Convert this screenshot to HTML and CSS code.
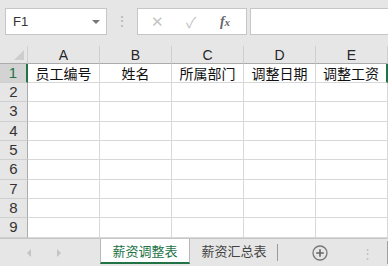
FILE: index.html
```html
<!DOCTYPE html>
<html lang="zh-CN">
<head>
  <meta charset="UTF-8" />
  <title>薪资调整表</title>
  <link rel="stylesheet" href="styles.css">
</head>
<body>
  <div class="toolbar">
    <div class="name-box">
      <span class="cell-ref">F1</span>
      <span class="drop-arrow"></span>
    </div>
    <div class="grip">⋮</div>
    <div class="fx-buttons">
      <span class="fx-btn cancel">✕</span>
      <span class="fx-btn enter">✓</span>
      <span class="fx-btn fx"><i>f</i><i class="x">x</i></span>
    </div>
    <div class="formula-input"></div>
  </div>

  <div class="sheet">
    <div class="corner"><span class="corner-tri"></span></div>
    <div class="col-head">A</div>
    <div class="col-head">B</div>
    <div class="col-head">C</div>
    <div class="col-head">D</div>
    <div class="col-head">E</div>

    <div class="row-head active">1</div>
    <div class="cell">员工编号</div>
    <div class="cell">姓名</div>
    <div class="cell">所属部门</div>
    <div class="cell">调整日期</div>
    <div class="cell last-sel">调整工资</div>
  </div>
  <div class="sheet-body" id="body"></div>

  <div class="tabs">
    <div class="nav">
      <span class="arrow left"></span>
      <span class="arrow right"></span>
    </div>
    <div class="tab current">薪资调整表</div>
    <div class="tab">薪资汇总表</div>
    <div class="tab-sep"></div>
    <div class="add-sheet">
      <svg width="16" height="16" viewBox="0 0 16 16">
        <circle cx="8" cy="8" r="7" fill="none" stroke="#777" stroke-width="1.3"/>
        <path d="M8 4.2v7.6M4.2 8h7.6" stroke="#666" stroke-width="1.6"/>
      </svg>
    </div>
    <div class="tab-grip">⋮</div>
    <div class="tab-end"></div>
  </div>

  <script>
    // rows 2..9, heights taken from the sheet
    const heights = [19, 20, 19, 19, 20, 19, 19, 20];
    const body = document.getElementById("body");
    heights.forEach((h, i) => {
      const row = document.createElement("div");
      row.className = "row";
      row.style.height = h + "px";
      let html = '<div class="row-head">' + (i + 2) + '</div>';
      for (let c = 0; c < 5; c++) html += '<div class="cell"></div>';
      row.innerHTML = html;
      body.appendChild(row);
    });
  </script>
</body>
</html>
```

FILE: styles.css
```css
body {
  margin: 0;
  width: 388px;
  height: 266px;
  overflow: hidden;
  background: #e6e6e6;
  font-family: "Liberation Sans", "Noto Sans CJK SC", sans-serif;
  color: #222;
}
.toolbar {
  height: 46px;
  box-sizing: border-box;
  padding: 8px 0 11px 5px;
  display: flex;
  align-items: stretch;
}
.name-box {
  width: 102px;
  box-sizing: border-box;
  background: white;
  border: 1px solid #c6c6c6;
  display: flex;
  align-items: center;
  justify-content: space-between;
  padding: 0 6px 0 7px;
}
.cell-ref {
  font-size: 13px;
  color: #333;
}
.drop-arrow {
  width: 0;
  height: 0;
  border-left: 4px solid transparent;
  border-right: 4px solid transparent;
  border-top: 4px solid #777;
}
.grip {
  width: 30px;
  text-align: center;
  color: #b4b4b4;
  font-size: 14px;
  line-height: 27px;
}
.fx-buttons {
  width: 110px;
  box-sizing: border-box;
  background: white;
  border: 1px solid #c6c6c6;
  display: flex;
  align-items: center;
  justify-content: space-around;
  padding: 0 4px 0 2px;
}
.fx-btn {
  width: 30px;
  text-align: center;
  color: #c4c4c4;
  font-size: 15px;
}
.fx-btn.fx {
  color: #666;
  font-family: "Liberation Serif", serif;
  font-size: 14px;
  font-weight: bold;
}
.fx-btn .x {
  font-size: 11px;
}
.formula-input {
  flex: 1;
  margin-left: 3px;
  background: white;
  border: 1px solid #c6c6c6;
  border-right: none;
}

.sheet, .row {
  display: grid;
  grid-template-columns: 28px repeat(5, 72px);
}
.sheet {
  grid-template-rows: 18px 19px;
}
.row {
  grid-template-rows: 100%;
}
.corner, .col-head, .row-head, .cell {
  box-sizing: border-box;
  min-height: 0;
}
.corner {
  background: #e6e6e6;
  border-right: 1px solid #d0d0d0;
  border-bottom: 1px solid #ababab;
  position: relative;
}
.corner-tri {
  position: absolute;
  right: 3px;
  bottom: 3px;
  width: 0;
  height: 0;
  border-left: 10px solid transparent;
  border-bottom: 10px solid #cdcdcd;
}
.col-head {
  background: #e6e6e6;
  border-right: 1px solid #cfcfcf;
  border-bottom: 1px solid #ababab;
  text-align: center;
  font-size: 14px;
  line-height: 18px;
  color: #262626;
}
.row-head {
  background: #e6e6e6;
  border-right: 1px solid #ababab;
  border-bottom: 1px solid #cfcfcf;
  text-align: center;
  font-size: 15px;
  line-height: 18px;
  color: #333;
  overflow: hidden;
}
.row-head.active {
  background: #d3d3d3;
  color: #217346;
  border-right: 2px solid #217346;
}
.cell {
  background: white;
  border-right: 1px solid #d8d8d8;
  border-bottom: 1px solid #d8d8d8;
  text-align: center;
  font-family: "Noto Sans CJK SC", sans-serif;
  font-size: 14px;
  line-height: 18px;
  color: #111;
  overflow: hidden;
  white-space: nowrap;
}
.cell.last-sel {
  border-right: 2px solid #217346;
}

.tabs {
  height: 28px;
  box-sizing: border-box;
  border-top: 1px solid #c6c6c6;
  display: flex;
  align-items: stretch;
  font-family: "Noto Sans CJK SC", sans-serif;
}
.nav {
  width: 100px;
  display: flex;
  align-items: center;
  padding-left: 27px;
  box-sizing: border-box;
  gap: 26px;
}
.arrow {
  width: 0;
  height: 0;
  border-top: 4px solid transparent;
  border-bottom: 4px solid transparent;
}
.arrow.left { border-right: 4px solid #c4c4c4; }
.arrow.right { border-left: 4px solid #c4c4c4; }
.tab {
  width: 88px;
  text-align: center;
  font-size: 13px;
  line-height: 24px;
  color: #444;
}
.tab.current {
  width: 90px;
  background: white;
  color: #217346;
  border-left: 1px solid #b8b8b8;
  border-right: 1px solid #b8b8b8;
  border-bottom: 2px solid #217346;
  margin-bottom: 2px;
  box-sizing: border-box;
  line-height: 23px;
}
.tab-sep {
  width: 1px;
  background: #9a9a9a;
  margin: 5px 0 5px -1px;
}
.add-sheet {
  width: 83px;
  display: flex;
  align-items: center;
  padding-left: 34px;
  box-sizing: border-box;
}
.tab-grip {
  width: 10px;
  color: #c0c0c0;
  font-size: 13px;
  line-height: 27px;
}
.tab-end {
  width: 1px;
  background: #a0a0a0;
  margin: 2px 0 2px 16px;
}
```
